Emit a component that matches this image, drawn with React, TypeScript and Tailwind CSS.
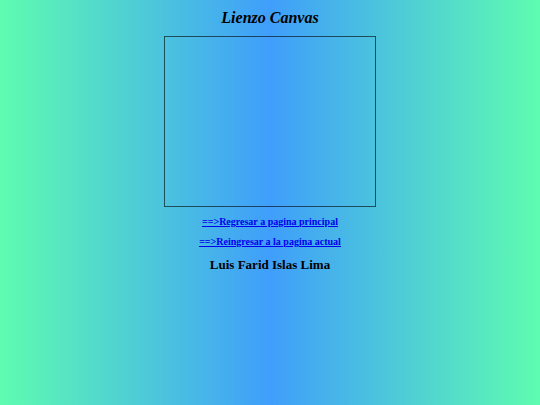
import React from 'react';

const App: React.FC = () => {
  return (
    <main className="min-h-screen bg-linear-[to_right,#5efcb0,#3f9efb,#5efcb0] flex flex-col items-center pt-2 font-['Liberation_Serif',serif] font-bold text-black">
      <h1 className="text-base leading-5 italic">Lienzo Canvas</h1>
      <canvas width={210} height={169} className="mt-2 border border-black/60" />
      <nav className="mt-[5px] flex flex-col items-center text-[10px] leading-5 text-[#0000ee] underline">
        <a href="#principal">==&gt;Regresar a pagina principal</a>
        <a href="#actual">==&gt;Reingresar a la pagina actual</a>
      </nav>
      <h2 className="mt-[3px] text-[13px] leading-5">Luis Farid Islas Lima</h2>
    </main>
  );
};

export default App;
